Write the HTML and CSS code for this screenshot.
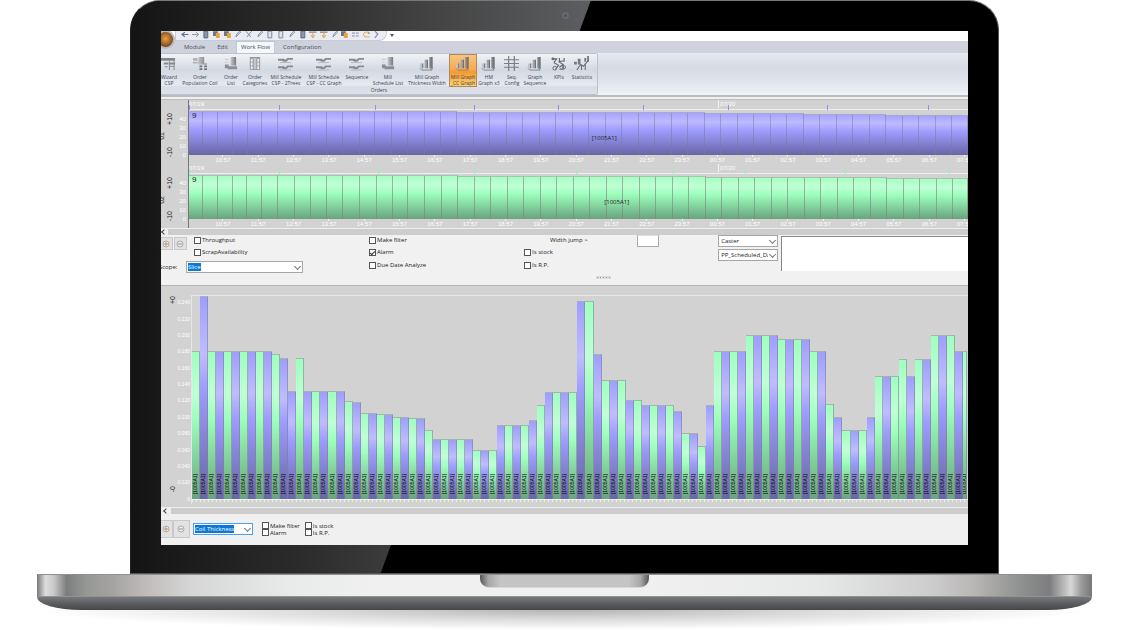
FILE: index.html
```html
<!DOCTYPE html>
<html lang="en">
<head>
<meta charset="utf-8">
<title>Mill Graph CC Graph</title>
<link rel="stylesheet" href="styles.css">
</head>
<body>
<svg class="defs" aria-hidden="true">
  <defs>
    <linearGradient id="metal" x1="0" y1="0" x2="1" y2="0"><stop offset="0" stop-color="#c8c9cc"/><stop offset="1" stop-color="#77797e"/></linearGradient>
    <symbol id="i-wizard" viewBox="0 0 16 16"><path d="M0 2h15v3H0zM3 7h5v2H3zM9 7h6v2H9zM4 11h3v1H4z" fill="#85878c"/><path d="M9 5v10M14 5v10M9 11h5" stroke="#85878c" fill="none"/></symbol>
    <symbol id="i-coil" viewBox="0 0 16 16"><path d="M1 2h5v3H1zM1 6h5v2H1z" fill="#b0b2b6"/><path d="M7 1h6v7h3v1H6z" fill="url(#metal)"/><path d="M8 10h3v2H8zM13 10h3v2h-3zM8 13h3v2H8zM13 13h3v2h-3z" fill="#6d6f74"/></symbol>
    <symbol id="i-list" viewBox="0 0 16 16"><path d="M8 1h6v9H8z" fill="url(#metal)"/><path d="M2 3h4v1H2zM2 6h4v1H2z" fill="#c2c4c8"/><path d="M2 9h4v4H2zM5 11h10v3H5z" fill="#8b8d92"/></symbol>
    <symbol id="i-cat" viewBox="0 0 16 16"><path d="M3 1h11v14H3z" fill="#94969b"/><path d="M4 3h2v3H4zM11 3h2v3h-2zM4 7h2v3H4zM11 7h2v3h-2zM4 11h2v3H4zM11 11h2v3h-2z" fill="#eceef2"/><path d="M7 2h3v12H7z" fill="#c3c5ca"/></symbol>
    <symbol id="i-sched" viewBox="0 0 16 16"><path d="M0 3h6l2 1 2-2h6v2h-5l-2 2H6L4 5H0zM0 11h6l2 1 2-2h6v2h-5l-2 2H6l-2-1H0z" fill="#898b90"/><path d="M2 7h12M2 15h12" stroke="#b6b8bd"/></symbol>
    <symbol id="i-graph" viewBox="0 0 16 16"><path d="M1 8h3v5H1zM6 4h3v9H6zM11 1h3v12h-3z" fill="url(#metal)"/><path d="M1 13l2 2h11l-2-2" stroke="#85878c" fill="none"/><path d="M4 8v5M9 4v9M14 1v13" stroke="#66686d"/></symbol>
    <symbol id="i-grid" viewBox="0 0 16 16"><path d="M5 0v16M11 0v16M0 4h16M0 8h16M0 12h16" stroke="#7b7d82" stroke-width="1.3"/></symbol>
    <symbol id="i-kpi" viewBox="0 0 16 16"><path d="M1 3h5l-3 4M9 2v4l5-1M14 2v4M3 7l5 3-3 4M8 6l5 3-4 3M13 9v5H9" stroke="#65676c" stroke-width="1.2" fill="none"/><circle cx="2" cy="3" r="1.5" fill="#65676c"/><circle cx="4" cy="13" r="2" fill="none" stroke="#65676c"/><circle cx="14" cy="12" r="1.500" fill="none" stroke="#65676c"/></symbol>
    <symbol id="i-stat" viewBox="0 0 16 16"><path d="M0 6h3v3H0zM4 3h3v6H4zM11 2h2v4h-2zM14 0h2v6h-2z" fill="#797b80"/><path d="M3 15l4-6 3 2 5-6M8 9v6M12 8v7" stroke="#6d6f74" stroke-width="1.2" fill="none"/></symbol>
    <symbol id="q-left" viewBox="0 0 8 8"><path d="M8 3.5H2M4 1L1 3.500 4 6" stroke="#5d6f90" stroke-width="1.2" fill="none"/></symbol>
    <symbol id="q-right" viewBox="0 0 8 8"><path d="M0 3.500h6M4 1l3 2.500L4 6" stroke="#8b95a8" fill="none"/></symbol>
    <symbol id="q-doc" viewBox="0 0 8 8"><path d="M2 0h4v7H2z" fill="#dfe3ec" stroke="#7a859a"/></symbol>
    <symbol id="q-save" viewBox="0 0 8 8"><path d="M2 0h4v7H2z" fill="#8d97a9" stroke="#59657c"/></symbol>
    <symbol id="q-orange" viewBox="0 0 8 8"><path d="M0 0h5v5H0z" fill="#6a7489"/><path d="M3 2h4v5H3z" fill="#eda13b"/></symbol>
    <symbol id="q-cut" viewBox="0 0 8 8"><path d="M1 0l5 6M7 0L2 6" stroke="#7f8aa0" fill="none"/></symbol>
    <symbol id="q-pen" viewBox="0 0 8 8"><path d="M2 6l1-3 3-3 1 1-3 3z" fill="#dce1ea" stroke="#8490a6"/></symbol>
    <symbol id="q-down" viewBox="0 0 8 8"><path d="M0 1h8" stroke="#59657c"/><path d="M4 1v5M2 4l2 3 2-3" stroke="#ec9a2d" fill="none"/></symbol>
    <symbol id="q-arc" viewBox="0 0 8 8"><path d="M6 1H3a2.500 2.500 0 0 0 0 5h4" stroke="#eaa544" fill="none"/><path d="M5 2h2" stroke="#59657c"/></symbol>
    <symbol id="q-lines" viewBox="0 0 8 8"><path d="M0 2h8M0 5h8" stroke="#7f8aa0" stroke-dasharray="3 1"/></symbol>
    <symbol id="q-end" viewBox="0 0 8 8"><path d="M2 0l3 3-3 4" stroke="#7f8aa0" stroke-width="1.2" fill="none"/></symbol>
    <symbol id="z-in" viewBox="0 0 8 8"><circle cx="4" cy="4" r="3" fill="#eee" stroke="#aaa"/><path d="M2 4h4M4 2v4" stroke="#c49256"/></symbol>
    <symbol id="z-out" viewBox="0 0 8 8"><circle cx="4" cy="4" r="3" fill="#eee" stroke="#aaa"/><path d="M2 4h4" stroke="#a88a78"/></symbol>
  </defs>
</svg>

<main class="laptop">
  <div class="lid">
    <span class="camera"></span>
    <div class="screen">
      <header class="quickbar">
        <button class="orb" aria-label="Application menu"></button>
        <div class="quick-tools">
          <svg><use href="#q-left"/></svg><svg><use href="#q-right"/></svg><svg><use href="#q-save"/></svg><svg><use href="#q-orange"/></svg><svg><use href="#q-orange"/></svg><svg><use href="#q-pen"/></svg><svg><use href="#q-cut"/></svg><svg><use href="#q-pen"/></svg><svg><use href="#q-doc"/></svg><svg><use href="#q-doc"/></svg><svg><use href="#q-pen"/></svg><svg><use href="#q-save"/></svg><svg><use href="#q-down"/></svg><svg><use href="#q-down"/></svg><svg><use href="#q-pen"/></svg><svg><use href="#q-orange"/></svg><svg><use href="#q-lines"/></svg><svg><use href="#q-arc"/></svg><svg><use href="#q-end"/></svg>
        </div>
        <button class="quick-more" aria-label="Customize toolbar"></button>
      </header>
      <nav class="tabs">
        <a href="#module">Module</a><a href="#edit">Edit</a><a href="#workflow" class="active">Work Flow</a><a href="#configuration">Configuration</a>
      </nav>
      <section class="ribbon">
        <div class="group">
          <div class="tools">
            <button class="tool"><svg><use href="#i-wizard"/></svg><span>Wizard<br>CSP</span></button>
            <button class="tool wide"><svg><use href="#i-coil"/></svg><span>Order<br>Population Coil</span></button>
            <button class="tool"><svg><use href="#i-list"/></svg><span>Order<br>List</span></button>
            <button class="tool"><svg><use href="#i-cat"/></svg><span>Order<br>Categories</span></button>
            <button class="tool wide"><svg><use href="#i-sched"/></svg><span>Mill Schedule<br>CSP - 2Trees</span></button>
            <button class="tool wide"><svg><use href="#i-sched"/></svg><span>Mill Schedule<br>CSP - CC Graph</span></button>
            <button class="tool mid"><svg><use href="#i-sched"/></svg><span>Sequence</span></button>
            <button class="tool large"><svg><use href="#i-list"/></svg><span>Mill<br>Schedule List</span></button>
            <button class="tool extra"><svg><use href="#i-graph"/></svg><span>Mill Graph<br>Thickness Width</span></button>
            <button class="tool mid selected"><svg><use href="#i-graph"/></svg><span>Mill Graph<br>_CC Graph</span></button>
            <button class="tool"><svg><use href="#i-graph"/></svg><span>HM<br>Graph x3</span></button>
            <button class="tool narrow"><svg><use href="#i-grid"/></svg><span>Seq.<br>Config</span></button>
            <button class="tool"><svg><use href="#i-graph"/></svg><span>Graph<br>Sequence</span></button>
            <button class="tool"><svg><use href="#i-kpi"/></svg><span>KPIs</span></button>
            <button class="tool narrow"><svg><use href="#i-stat"/></svg><span>Statistics</span></button>
          </div>
          <div class="group-name">Orders</div>
        </div>
      </section>
      <div class="divider"></div>

      <section class="timelines">
        <div class="timeline violet" data-line="one">
          <div class="gutter"><span>-10</span><span>01</span><span>+10</span></div>
          <div class="scale"><span>40</span><span>30</span><span>20</span><span>10</span><span>0</span></div>
          <div class="track"><div class="dates"></div><div class="slabs"><b>9</b><em>[1005A1]</em></div><div class="times"></div></div>
        </div>
        <div class="timeline green" data-line="two">
          <div class="gutter"><span>-10</span><span>02</span><span>+10</span></div>
          <div class="scale"><span>40</span><span>30</span><span>20</span><span>10</span><span>0</span></div>
          <div class="track"><div class="dates"></div><div class="slabs"><b>9</b><em>[1005A1]</em></div><div class="times"></div></div>
        </div>
      </section>
      <div class="scrollbar"><button aria-label="Scroll left"></button></div>

      <form class="filters">
        <div class="filters-left">
          <div class="zoom-row">
            <button type="button" class="zoom" aria-label="Zoom in"><svg><use href="#z-in"/></svg></button>
            <button type="button" class="zoom" aria-label="Zoom out"><svg><use href="#z-out"/></svg></button>
            <div class="checks">
              <label><input type="checkbox">Throughput</label>
              <label><input type="checkbox">ScrapAvailability</label>
            </div>
          </div>
          <div class="scope"><label for="scope">Scope:</label><span class="combo"><select id="scope"><option>Slice</option></select><span class="picked" aria-hidden="true">Slice</span></span></div>
        </div>
        <div class="checks">
          <label><input type="checkbox">Make filter</label>
          <label><input type="checkbox" checked>Alarm</label>
          <label><input type="checkbox">Due Date Analyze</label>
        </div>
        <div class="checks">
          <label class="jump" for="jump">Width jump &gt;</label>
          <label><input type="checkbox">Is stock</label>
          <label><input type="checkbox">Is R.P.</label>
        </div>
        <div><input id="jump" class="jump-box" type="text"></div>
        <div class="selects">
          <select aria-label="Unit"><option>Caster</option></select>
          <select aria-label="Sort by"><option>PP_Scheduled_Dat</option></select>
        </div>
        <textarea class="notes" aria-label="Notes"></textarea>
        <div class="grip"><i></i><i></i><i></i><i></i><i></i></div>
      </form>

      <section class="thickness">
        <div class="signs"><span>+0</span><span>-0</span></div>
        <div class="values"></div>
        <div class="plot"><div class="bars"></div><div class="ruler"></div></div>
      </section>
      <div class="scrollbar low"><button aria-label="Scroll left"></button></div>

      <form class="footer">
        <button type="button" class="zoom" aria-label="Zoom in"><svg><use href="#z-in"/></svg></button>
        <button type="button" class="zoom" aria-label="Zoom out"><svg><use href="#z-out"/></svg></button>
        <span class="combo focus"><select aria-label="Series"><option>Coil Thickness</option></select><span class="picked" aria-hidden="true">Coil Thickness</span></span>
        <div class="checks"><label><input type="checkbox">Make filter</label><label><input type="checkbox">Alarm</label></div>
        <div class="checks"><label><input type="checkbox">Is stock</label><label><input type="checkbox">Is R.P.</label></div>
      </form>
    </div>
  </div>
  <div class="base"><div class="deck"><div class="notch"></div></div><div class="belly"></div><div class="shadow"></div></div>
</main>
<script src="app.js"></script>
</body>
</html>
```
FILE: app.js
```js
// [thickness, repeat] runs; colours alternate except where a coil repeats its line
const runs = [[.18,1],[.247,1],[.18,8],[.177,1],[.172,1],[.132,1],[.172,1],[.132,5],[.119,1],[.118,1],
  [.105,2],[.104,2],[.1,2],[.099,2],[.084,1],[.0725,5],[.06,3],[.0895,4],[.096,1],[.115,1],[.13,4],
  [.241,2],[.177,1],[.1445,3],[.12,2],[.115,4],[.107,1],[.08,2],[.065,1],[.115,1],[.18,4],[.2,4],
  [.195,4],[.18,2],[.116,1],[.1,1],[.0845,3],[.1,1],[.15,3],[.17,1],[.15,1],[.17,2],[.2,3],[.18,2]];
const repeats = new Set([12, 88]);
const bars = document.querySelector('.bars');
let green = false, index = 0;
for (const [value, count] of runs) {
  for (let k = 0; k < count; k++, index++) {
    if (!repeats.has(index)) green = !green;
    const bar = document.createElement('div');
    bar.className = 'bar ' + (green ? 'green' : 'violet');
    bar.style.height = (value / 0.247 * 100) + '%';
    bar.innerHTML = '<span>[1005A1]</span>';
    bars.append(bar);
  }
}
bars.lastChild.classList.add('partial');

const values = document.querySelector('.values');
for (let i = 12; i >= 0; i--) {
  const s = document.createElement('span');
  s.textContent = i ? (i * 0.02).toFixed(3) : '0';
  values.append(s);
}

// widths of the slabs, height steps and marker offsets, in units of a 779 wide track
const lines = {
  one: { widths: [14,15,15,15,14,16,16,17,15,17,16,15,17,16,17], steps: [[268,44],[400,43],[500,43],[605,42],[687,41],[766,40],[900,39]],
         marks: [0,90,186,285,369,454,539,638,739] },
  two: { widths: [14,15,15,14,15,15,17,16,17,16,17,17,16,15,17], steps: [[254,44],[510,43],[690,42],[778,41],[900,40]],
         marks: [0,90,189,285,387,484,556,656,760] }
};
document.querySelectorAll('.timeline').forEach(el => {
  const { widths, steps, marks } = lines[el.dataset.line];
  const slabs = el.querySelector('.slabs');
  let x = 0, n = 0;
  while (x < 779) {
    const w = Math.min(n < widths.length ? widths[n] : 16 + n % 2, 779 - x);
    const d = document.createElement('div');
    d.className = 'slab';
    d.style.flexGrow = w;
    d.style.height = steps.find(s => x < s[0])[1] / 45 * 100 + '%';
    slabs.append(d);
    x += w; n++;
  }
  const dates = el.querySelector('.dates');
  dates.innerHTML = '<span class="first">07/19</span><span class="second" style="left:67.9%">07/20</span>';
  for (const m of marks) {
    const i = document.createElement('i');
    i.style.left = m / 779 * 100 + '%';
    dates.append(i);
  }
  const times = el.querySelector('.times');
  for (let h = 10; h < 32; h++) {
    const s = document.createElement('span');
    s.textContent = String(h % 24).padStart(2, '0') + ':57';
    times.append(s);
  }
});
```
FILE: styles.css
```css
* { box-sizing: border-box; }
body { margin: 0; background: #fff; color: #222; font: 6px/8px "Open Sans", "Noto Sans", sans-serif; overflow: hidden; }
button, input, select, textarea { font: inherit; color: inherit; margin: 0; padding: 0; }
.defs { position: absolute; width: 0; height: 0; }
i, em, b { font-style: normal; font-weight: 400; }

.lid { position: relative; margin: 0 12.35% 0 11.4%; padding: 30px 30px 28px 30px; background: #000; border: 1px solid #444; border-color: #77797c #555 #555 #222; border-radius: 30px 30px 0 0; overflow: hidden; }
.lid::before { content: ""; position: absolute; inset: 0; background: linear-gradient(90deg, #141414, #2c2c2c 20%, #444 35%, #5c5e61 53%); clip-path: polygon(0 0, 53% 0, 28.8% 100%, 0 100%); }
.camera { position: absolute; top: 11px; left: 50%; width: 7px; height: 7px; margin-left: -3px; border-radius: 50%; background: #50507c; border: 2px solid #686870; }
.screen { position: relative; background: #f0f0f0; overflow: hidden; }

.quickbar { display: flex; height: 10px; background: #fff; position: relative; }
.orb { position: absolute; z-index: 2; left: -5px; top: -1px; width: 19px; height: 19px; border-radius: 50%; border: 2px solid #b8bac0; background: radial-gradient(circle at 50% 45%, #e5a24a, #9a5b22 55%, #4c3627 90%); }
.quick-tools { display: flex; align-items: flex-start; gap: 3px; margin-left: 14px; padding: 0 5px; width: 212px; overflow: hidden; background: #e9ecf2; border: 1px solid #c8ccd5; border-top: 0; border-radius: 0 0 8px 0; }
.quick-tools svg { flex: 1; min-width: 0; height: 8px; }
.quick-more { border: 2px solid transparent; border-top: 3px solid #555; background: none; width: 4px; height: 3px; margin: 3px 0 0 3px; }
.tabs { display: flex; align-items: stretch; height: 12px; padding-left: 17px; background: #ced2dc; }
.tabs a { padding: 2px 6px; color: #4a4e59; text-decoration: none; line-height: 9px; }
.tabs a.active { background: #f3f8fb; border: 1px solid #b7cbd7; border-bottom: 0; padding: 1px 4px 0; margin: 0 2px; }

.ribbon { background: linear-gradient(#e6e9ef, #d5dae4 35%, #e4eaf0 80%, #eef4f7); height: 42px; }
.group { width: 437px; height: 42px; background: linear-gradient(#f0f2f6, #e2e6ed 20%, #d3d8e2 40%, #e6eaf0 78%, #d8dde6 82%, #dce1e9); border: 1px solid #bcc1cc; border-left: 0; border-radius: 0 2px 2px 0; }
.tools { display: flex; margin-left: -4px; height: 33px; }
.tool { flex: none; width: 24px; border: 0; background: none; color: #3b3f50; font-size: 5px; line-height: 6px; text-align: center; white-space: nowrap; display: flex; flex-direction: column; align-items: center; justify-content: flex-start; }
.tool svg { width: 15px; height: 15px; margin: 2px 0 3px; flex: none; }
.narrow { width: 22px; }
.mid { width: 28px; }
.large { width: 34px; }
.wide { width: 38px; }
.extra { width: 44px; }
.selected { background: linear-gradient(#f6c58a, #f6ab50 45%, #f59a2e 55%, #fcd877); outline: 1px solid #b08a5a; outline-offset: -1px; }
.group-name { text-align: center; font-size: 5px; line-height: 7px; color: #3b3f50; }
.divider { height: 5px; background: #f0f0f0; border-top: 2px solid #b8bdc5; border-bottom: 1px solid #bbb; }

.timelines, .thickness { background: #d2d2d2; }
.timeline { display: flex; height: 64px; }
.gutter { width: 13px; display: flex; flex-direction: column; justify-content: space-between; padding: 13px 0 7px; }
.gutter span, .signs span { writing-mode: vertical-rl; transform: rotate(180deg); font: 7px/8px "Liberation Sans", sans-serif; align-self: flex-end; }
.gutter span:first-child { order: 3; }
.gutter span:nth-child(2) { order: 2; align-self: flex-start; margin-left: -3px; }
.scale { width: 14px; padding: 15px 2px 4px 0; display: flex; flex-direction: column; justify-content: space-between; text-align: right; color: #fff; font: 6px/9px "Liberation Sans", sans-serif; }
.track { flex: 1; min-width: 0; border-left: 1px solid #777; }
.dates { position: relative; height: 10px; border-bottom: 1px solid #eee; color: #fff; font: 6px/8px "Liberation Sans", sans-serif; }
.second { position: absolute; border-left: 1px solid #f4f4f4; padding-left: 1px; }
.dates i { position: absolute; bottom: -1px; width: 1px; height: 5px; background: #8f8cff; }
.green .dates i { background: #7effaa; }
.slabs { display: flex; align-items: flex-end; height: 45px; position: relative; }
.slab { flex: 1 1 0; background: linear-gradient(#a6a4ff, #bdbbff 20%, #9f9dff 40%, #6866a5); border-right: 1px solid rgba(125, 120, 150, .5); border-top: 1px solid #aaa9cc; }
.green .slab { background: linear-gradient(#a4ffc2, #c0ffd6 20%, #9effbe 40%, #68a57d); border-right-color: rgba(125, 130, 125, .6); border-top-color: #a6c4b0; }
.slabs b { position: absolute; left: 3px; top: 1px; font: 8px/9px "Liberation Sans", sans-serif; }
.slabs em { position: absolute; left: 51.7%; top: 24px; font: 6px/8px "Open Sans", sans-serif; }
.green .slabs em { left: 53.3%; }
.times { display: grid; grid-template-columns: repeat(22, 4.63%); margin-left: 2.1%; height: 9px; overflow: hidden; text-align: center; color: #fff; font: 6px/9px "Liberation Sans", sans-serif; }
.times span { padding-top: 1px; background: linear-gradient(#f4f4f4, #f4f4f4) 50% 0 / 1px 2px no-repeat; }

.scrollbar { height: 7px; background: #cdcdcd; border-top: 1px solid #eee; display: flex; }
.scrollbar button { width: 7px; border: 0; background: #f0f0f0; display: grid; place-items: center; }
.scrollbar button::before { content: ""; width: 3px; height: 3px; border: solid #444; border-width: 0 0 1px 1px; transform: rotate(45deg); }
.scrollbar.low { height: 8px; border-bottom: 1px solid #eee; }
.scrollbar.low button { width: 10px; }

.filters { display: grid; grid-template-columns: 208fr 155fr 113fr 81fr 60fr 190fr; height: 51px; background: #f1f1f1; position: relative; border-bottom: 1px solid #b4b4b4; }
.zoom-row { display: flex; }
.zoom { width: 13px; height: 13px; margin-top: 2px; border: 1px solid #c9c9c9; background: #e2e2e2; display: grid; place-items: center; }
.zoom:first-child { border-left: 0; width: 12px; margin-right: 1px; }
.zoom svg { width: 8px; height: 8px; }
.checks { display: flex; flex-direction: column; color: #222; margin-top: -1px; }
.checks label { display: flex; align-items: center; gap: 1px; height: 12px; white-space: nowrap; }
.checks label:nth-child(3) { margin-top: 1px; }
.zoom-row .checks { margin-left: 7px; }
input[type=checkbox] { appearance: none; width: 7px; height: 7px; border: 1px solid #555; background: #fff; display: grid; place-items: center; }
input[type=checkbox]:checked::before { content: ""; width: 4px; height: 2px; border: solid #333; border-width: 0 0 1px 1px; transform: rotate(-45deg); }
.checks .jump { padding-left: 26px; }
.scope { display: flex; align-items: center; margin: 3px 0 0 -2px; }
.scope label { width: 27px; }
.combo { position: relative; display: block; width: 117px; height: 12px; }
select { appearance: none; border: 1px solid #a6a6a6; border-radius: 0; background: #fff; height: 12px; width: 100%; padding: 0 9px 0 2px; line-height: 9px; display: block; }
.combo::after, .selects::before, .selects::after { content: ""; position: absolute; right: 3px; top: 3px; width: 4px; height: 4px; border: solid #777; border-width: 0 1px 1px 0; transform: rotate(45deg); pointer-events: none; }
.combo select { color: transparent; }
.picked { position: absolute; left: 2px; top: 2px; background: #0a78d7; color: #fff; line-height: 8px; pointer-events: none; }
.jump-box { width: 22px; height: 12px; border: 1px solid #aaa; background: #fff; display: block; border-top-color: #ddd; }
.selects { position: relative; display: flex; flex-direction: column; gap: 2px; }
.selects::after { top: 17px; }
.notes { appearance: none; resize: none; border: solid #888; border-width: 1px 0 0 1px; margin: 1px 0 0 3px; height: 35px; border-radius: 0; background: #fff; display: block; outline: 0; }
.grip { position: absolute; left: 54%; bottom: 7px; display: flex; gap: 2px; }
.grip i { width: 1px; height: 1px; background: #999; outline: 1px solid #ddd; }

.thickness { display: flex; height: 221px; }
.signs { width: 16px; padding: 10px 0 15px; display: flex; flex-direction: column; justify-content: space-between; }
.values { width: 13px; height: 213px; margin-top: 8px; display: grid; grid-template-rows: repeat(13, 1fr); align-items: center; text-align: right; color: #fff; font: 5px/8px "Liberation Sans", sans-serif; }
.plot { flex: 1; min-width: 0; margin: 9px 0 0 1px; border: solid #e6e6e6; border-width: 1px 0 0 1px; height: 209px; }
.bars { display: flex; align-items: flex-end; height: 203px; }
.bar { flex: 1 1 0; min-width: 0; overflow: hidden; display: flex; align-items: flex-end; justify-content: center; padding-bottom: 5px; border-top: 1px solid #a5b5ae; border-right: 1px solid rgba(125, 130, 145, .6); background: linear-gradient(#9f9dff, #bfbdff 28%, #9e9cff 45%, #6866a5); }
.bar.green { background: linear-gradient(#9effbe, #c0ffd6 28%, #9effbe 45%, #68a57d); }
.bar.partial { flex-grow: .5; }
.bar span { writing-mode: vertical-rl; transform: rotate(180deg); font: 5px/7px "Liberation Sans", sans-serif; color: #000; }
.ruler { height: 3px; border-top: 1px solid #eee; background: repeating-linear-gradient(90deg, #eee 0 1px, transparent 1px 4px); }

.footer { display: flex; height: 30px; padding-top: 4px; }
.footer .zoom { width: 17px; height: 18px; margin-top: 1px; }
.footer .zoom:first-child { width: 12px; margin-right: 0; }
.footer .combo { width: 60px; margin: 4px 9px 0 3px; }
.footer .focus select { border-color: #4ba0e8; }
.footer .checks { margin: 3px 5px 0 0; }
.footer .checks label { height: 7px; }

.base { margin: 0 4.2% 0 3.25%; }
.deck { height: 23px; border: 1px solid #8f9091; border-width: 1px 0; background: linear-gradient(90deg, #777 0, #ddd 2%, #c8c8c8 4%, #7d7d7f 7%, #979997 12%, #a5a3a1 18%, #c0bcbb 26%, #d5d5d5 36%, #e8ebea 60%, #f0f0f0 80%, #f0f0f0) 0 0 / 40% 100% no-repeat, linear-gradient(90deg, #f0f0f0 58%, #e7e9e8 74%, #ccc 85%, #b8b5b4 89%, #8f9391 93%, #7d7d7f 96%, #d8d8d8 98%, #999 99%, #777 100%); }
.notch { width: 16%; height: 13px; margin-left: 42%; border-radius: 0 0 9px 9px; background: linear-gradient(90deg, #555, #a8a8a8 5%, #c4c4c4 12%, #c4c4c4 88%, #a8a8a8 95%, #555); border-bottom: 1px solid #d8d8d8; }
.belly { height: 13px; background: linear-gradient(#77797d, #5c5d60 50%, #464648); border-radius: 0 0 44px 44px / 0 0 13px 13px; }
.shadow { height: 20px; background: radial-gradient(ellipse 50% 100% at 50% 0, #b4b4b4, #ddd 50%, #fff); }
```
